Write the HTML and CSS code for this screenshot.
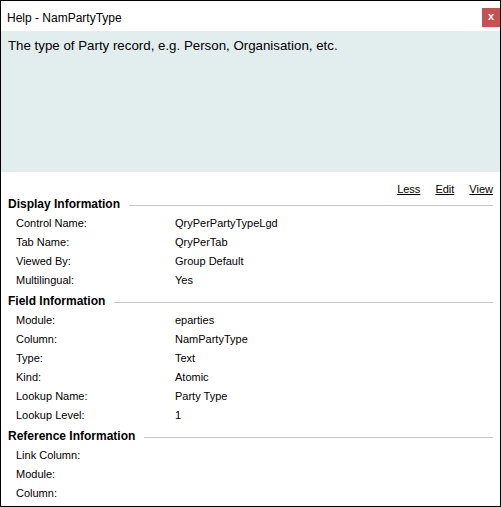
FILE: index.html
```html
<!DOCTYPE html>
<html>
<head>
<meta charset="utf-8">
<title>Help - NamPartyType</title>
<link rel="stylesheet" href="styles.css">
</head>
<body>
<div class="window">
  <div class="titlebar">
    <span class="title">Help - NamPartyType</span>
    <span class="close">x</span>
  </div>
  <div class="desc">The type of Party record, e.g. Person, Organisation, etc.</div>
  <div class="links">
    <a class="link">Less</a>
    <a class="link">Edit</a>
    <a class="link">View</a>
  </div>
  <div class="section">
    <div class="sec-head"><span>Display Information</span><span class="rule"></span></div>
    <div class="row"><span class="label">Control Name:</span><span class="value">QryPerPartyTypeLgd</span></div>
    <div class="row"><span class="label">Tab Name:</span><span class="value">QryPerTab</span></div>
    <div class="row"><span class="label">Viewed By:</span><span class="value">Group Default</span></div>
    <div class="row"><span class="label">Multilingual:</span><span class="value">Yes</span></div>
  </div>
  <div class="section">
    <div class="sec-head"><span>Field Information</span><span class="rule"></span></div>
    <div class="row"><span class="label">Module:</span><span class="value">eparties</span></div>
    <div class="row"><span class="label">Column:</span><span class="value">NamPartyType</span></div>
    <div class="row"><span class="label">Type:</span><span class="value">Text</span></div>
    <div class="row"><span class="label">Kind:</span><span class="value">Atomic</span></div>
    <div class="row"><span class="label">Lookup Name:</span><span class="value">Party Type</span></div>
    <div class="row"><span class="label">Lookup Level:</span><span class="value">1</span></div>
  </div>
  <div class="section">
    <div class="sec-head"><span>Reference Information</span><span class="rule"></span></div>
    <div class="row"><span class="label">Link Column:</span><span class="value"></span></div>
    <div class="row"><span class="label">Module:</span><span class="value"></span></div>
    <div class="row"><span class="label">Column:</span><span class="value"></span></div>
  </div>
</div>
</body>
</html>
```

FILE: styles.css
```css
html, body {
  margin: 0;
  padding: 0;
  background: #ffffff;
}
.window {
  width: 501px;
  height: 507px;
  box-sizing: border-box;
  border: 1px solid #000000;
  background: #ffffff;
  font-family: "Liberation Sans", Arial, sans-serif;
  color: #000000;
  overflow: hidden;
}
.titlebar {
  display: flex;
  height: 30px;
  align-items: flex-start;
}
.title {
  font-size: 12px;
  line-height: 26px;
  padding-top: 4px;
  padding-left: 6px;
}
.close {
  margin-left: auto;
  margin-top: 7px;
  width: 18px;
  height: 19px;
  background: #c75050;
  color: #ffffff;
  font-weight: bold;
  font-size: 11px;
  line-height: 17px;
  text-align: center;
}
.desc {
  height: 141px;
  box-sizing: border-box;
  background: #e2eeee;
  padding: 7px 7px 0 7px;
  font-size: 13.3px;
  line-height: 16px;
}
.links {
  display: flex;
  justify-content: flex-end;
  gap: 15px;
  height: 23px;
  box-sizing: border-box;
  padding: 11px 7px 0 0;
  font-size: 11px;
  line-height: 12px;
}
.link {
  color: #000000;
  text-decoration: underline;
}
.section {
  padding: 0 7px 0 7px;
}
.section + .section {
  margin-top: 2px;
}
.sec-head {
  display: flex;
  align-items: center;
  height: 19px;
  font-size: 12px;
  font-weight: bold;
  line-height: 19px;
}
.rule {
  flex: 1;
  height: 1px;
  background: #c6c6c6;
  margin-left: 9px;
  margin-top: 1px;
}
.row {
  display: flex;
  height: 19px;
  font-size: 11px;
  line-height: 19px;
  padding-left: 8px;
}
.label {
  width: 159px;
}
```
